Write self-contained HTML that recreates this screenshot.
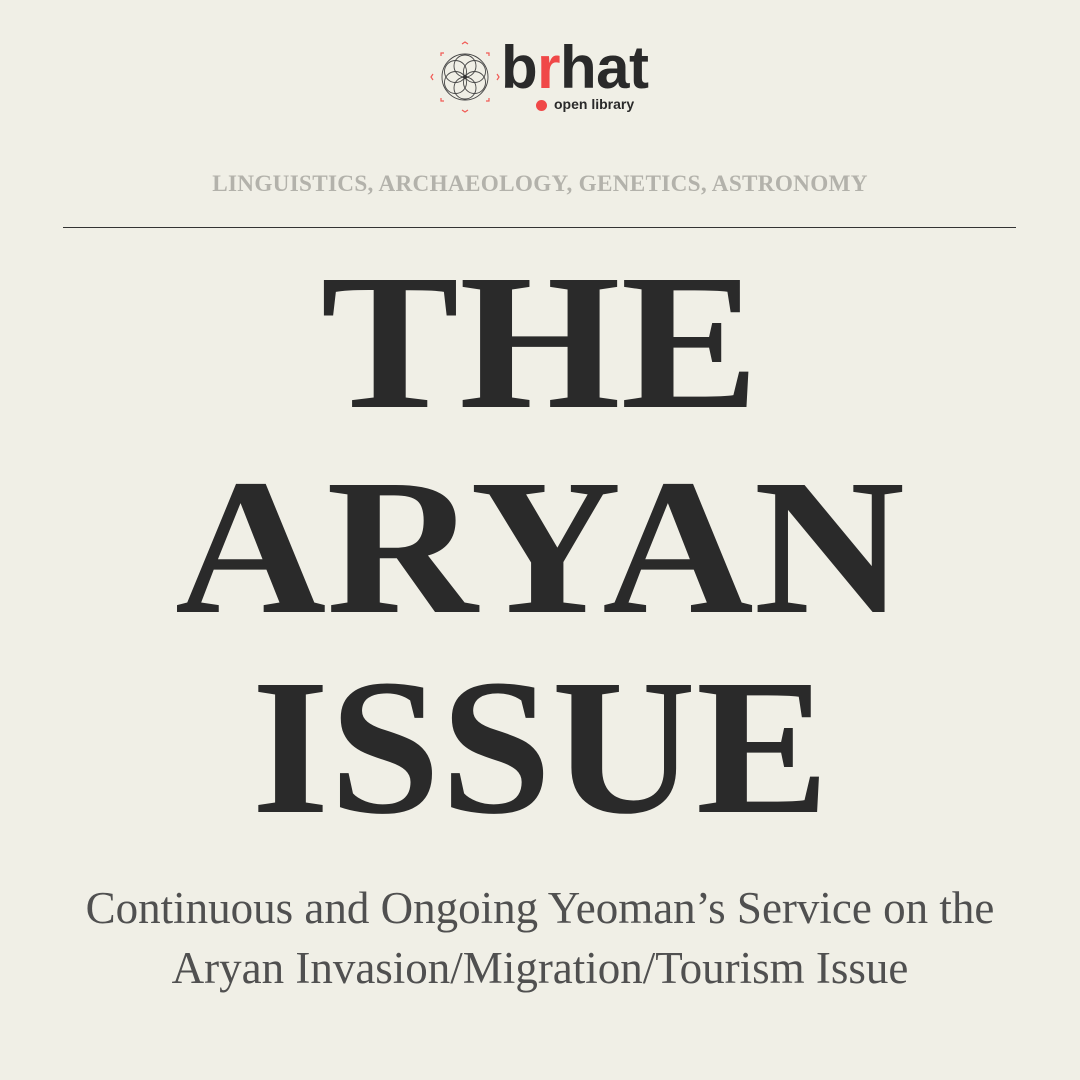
<!DOCTYPE html>
<html><head><style>
body{margin:0;width:1080px;height:1080px;background:#f0efe6;position:relative;overflow:hidden;font-family:"Liberation Serif",serif;color:#2a2a2a}
.c{position:absolute;left:0;width:1080px;text-align:center;white-space:nowrap}
.big{font-weight:bold;font-size:194px;line-height:1}
.big span{display:inline-block}
</style></head><body>
<svg style="position:absolute;left:430px;top:40px" width="72" height="75" viewBox="0 0 72 75">
<g fill="none" stroke="#444" stroke-width="0.9">
<circle cx="35" cy="37" r="23"/>
<circle cx="35" cy="26" r="11"/><circle cx="35" cy="48" r="11"/>
<circle cx="44.5" cy="31.5" r="11"/><circle cx="25.5" cy="31.5" r="11"/>
<circle cx="44.5" cy="42.5" r="11"/><circle cx="25.5" cy="42.5" r="11"/>
</g>
<circle cx="35" cy="37" r="2" fill="#333"/>
<g fill="none" stroke="#f15a55" stroke-width="1.2">
<path d="M32 4l3-2 3 2M32 70l3 2 3-2M3 34l-2 3 2 3M67 34l2 3-2 3"/>
<path d="M11 16v-3h3M59 16v-3h-3M11 58v3h3M59 58v3h-3"/>
</g>
</svg>
<div style="position:absolute;left:501px;top:38px;font-family:'Liberation Sans',sans-serif;font-weight:bold;font-size:60px;letter-spacing:-0.5px;line-height:1;color:#2a2a2a">b<span style="color:#f04848">r</span>hat</div>
<div style="position:absolute;left:536px;top:100px;width:11px;height:11px;border-radius:50%;background:#f04848"></div>
<div style="position:absolute;left:554px;top:96px;font-family:'Liberation Sans',sans-serif;font-weight:bold;font-size:14px;color:#2a2a2a">open library</div>
<div class="c" style="top:171px;font-size:23.2px;font-weight:bold;color:#b3b2ab;letter-spacing:0.3px">LINGUISTICS, ARCHAEOLOGY, GENETICS, ASTRONOMY</div>
<div style="position:absolute;left:63px;top:227px;width:953px;height:1px;background:#333"></div>
<div class="c big" style="top:245px"><span style="transform:scaleX(1.07)">THE</span></div>
<div class="c big" style="top:450px"><span style="transform:scaleX(1.08)">ARYAN</span></div>
<div class="c big" style="top:650px"><span style="transform:scaleX(1.03)">ISSUE</span></div>
<div class="c" style="top:878px;font-size:45px;color:#505050;line-height:60px">Continuous and Ongoing Yeoman’s Service on the<br>Aryan Invasion/Migration/Tourism Issue</div>
</body></html>
